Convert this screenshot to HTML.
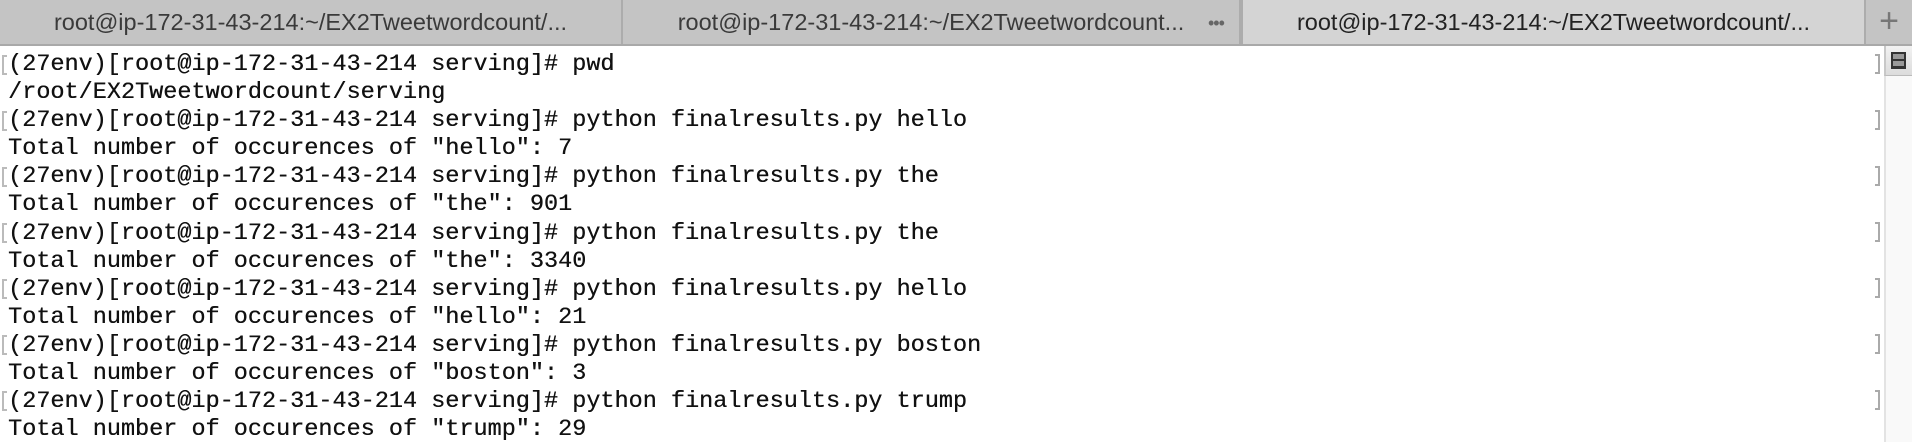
<!DOCTYPE html>
<html><head><meta charset="utf-8"><style>
*{margin:0;padding:0;box-sizing:border-box}
body{width:1912px;height:442px;overflow:hidden;background:#fff;position:relative;font-family:"Liberation Sans",sans-serif}
.tabs{position:absolute;left:0;top:0;width:1912px;height:46px;background:#c4c4c4;border-bottom:2px solid #a9a9a9}
.tab{position:absolute;top:0;height:44px;line-height:44px;text-align:center;font-size:23.5px;color:#3a3a3a;border-right:2px solid #acacac}
.t1{left:0;width:623px}
.t2{left:623px;width:618px}
.t3{left:1241px;width:625px;background:#d4d4d4;color:#222;border-left:2px solid #acacac}
.dots{position:absolute;left:1208px;top:0;line-height:46px;font-size:18px;color:#666;letter-spacing:-1px}
.plus{position:absolute;left:1866px;top:0;width:46px;height:44px;line-height:42px;text-align:center;font-size:34px;color:#777;font-weight:300}
.term{position:absolute;left:8px;top:51px;font-family:"Liberation Mono",monospace;font-size:23.5px;line-height:28.1px;color:#111;white-space:pre;text-shadow:0.3px 0 0 #111}
.lb{position:absolute;left:2px;width:5px;height:20px;border:2px solid #bbb;border-right:none}
.rb{position:absolute;left:1875px;width:5px;height:20px;border:2px solid #aaa;border-left:none}
.sb{position:absolute;left:1884px;top:46px;width:28px;height:396px;background:#f9f9f9;border-left:2px solid #e3e3e3}
.sbb{position:absolute;left:1884px;top:46px;width:28px;height:30px;background:linear-gradient(#f2f2f2,#dcdcdc);border-left:2px solid #c8c8c8;border-bottom:1px solid #bbb}
.ic{position:absolute;left:1891px;top:52px;width:15px;height:17px;background:#333;padding:2px}
.ic i{display:block;height:5px;background:#999;margin-bottom:2px}
</style></head><body>
<div class="tabs">
<div class="tab t1">root@ip-172-31-43-214:~/EX2Tweetwordcount/...</div>
<div class="tab t2">root@ip-172-31-43-214:~/EX2Tweetwordcount...</div>
<div class="dots">•••</div>
<div class="tab t3">root@ip-172-31-43-214:~/EX2Tweetwordcount/...</div>
<div class="plus">+</div>
</div>
<div class="sb"></div><div class="sbb"></div><div class="ic"><i></i><i></i></div>
<div class="lb" style="top:55px"></div><div class="lb" style="top:111px"></div><div class="lb" style="top:167px"></div><div class="lb" style="top:223px"></div><div class="lb" style="top:279px"></div><div class="lb" style="top:335px"></div><div class="lb" style="top:391px"></div>
<div class="rb" style="top:54px"></div><div class="rb" style="top:110px"></div><div class="rb" style="top:166px"></div><div class="rb" style="top:222px"></div><div class="rb" style="top:278px"></div><div class="rb" style="top:334px"></div><div class="rb" style="top:390px"></div>
<div class="term">(27env)[root@ip-172-31-43-214 serving]# pwd
/root/EX2Tweetwordcount/serving
(27env)[root@ip-172-31-43-214 serving]# python finalresults.py hello
Total number of occurences of "hello": 7
(27env)[root@ip-172-31-43-214 serving]# python finalresults.py the
Total number of occurences of "the": 901
(27env)[root@ip-172-31-43-214 serving]# python finalresults.py the
Total number of occurences of "the": 3340
(27env)[root@ip-172-31-43-214 serving]# python finalresults.py hello
Total number of occurences of "hello": 21
(27env)[root@ip-172-31-43-214 serving]# python finalresults.py boston
Total number of occurences of "boston": 3
(27env)[root@ip-172-31-43-214 serving]# python finalresults.py trump
Total number of occurences of "trump": 29</div>
</body></html>
